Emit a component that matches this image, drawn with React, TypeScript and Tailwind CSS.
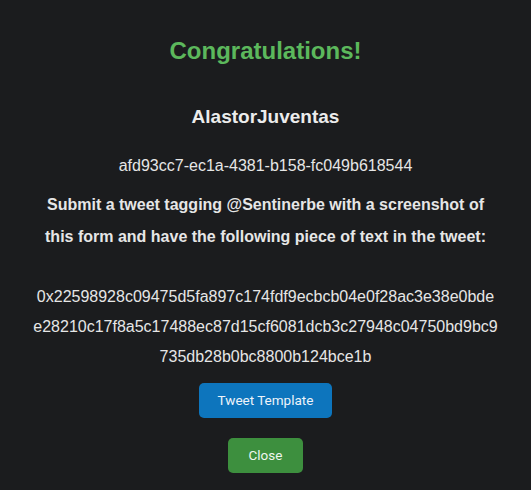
export default function App() {
  return (
    <div className="min-h-[490px] w-full bg-[#1b1c1e] text-[#e6e6e6] flex flex-col items-center" style={{ fontFamily: '"Liberation Sans", Arial, sans-serif' }}>
      <h1 className="mt-[35px] text-[24px] leading-[32px] font-bold text-[#5cb85c]">Congratulations!</h1>
      <h2 className="mt-[38px] text-[19px] leading-[24px] font-bold text-[#ececec]">AlastorJuventas</h2>
      <p className="mt-[25px] text-[16px] leading-[24px]">afd93cc7-ec1a-4381-b158-fc049b618544</p>
      <p className="mt-[11px] text-[16px] leading-[32px] font-bold text-center">
        Submit a tweet tagging @Sentinerbe with a screenshot of
        <br />
        this form and have the following piece of text in the tweet:
      </p>
      <p className="mt-[29px] text-[16px] leading-[30px] text-center">
        0x22598928c09475d5fa897c174fdf9ecbcb04e0f28ac3e38e0bde
        <br />
        e28210c17f8a5c17488ec87d15cf6081dcb3c27948c04750bd9bc9
        <br />
        735db28b0bc8800b124bce1b
      </p>
      <button className="mt-[11px] h-[35px] w-[133px] rounded-[5px] bg-[#0d75bd] text-[13.5px] text-[#eef4fa]" style={{ fontFamily: 'Roboto, "Liberation Sans", sans-serif' }}>
        Tweet Template
      </button>
      <button className="mt-[20px] h-[35px] w-[75px] rounded-[5px] bg-[#3d8f3e] text-[13.5px] text-[#eef6ee]" style={{ fontFamily: 'Roboto, "Liberation Sans", sans-serif' }}>
        Close
      </button>
    </div>
  );
}
